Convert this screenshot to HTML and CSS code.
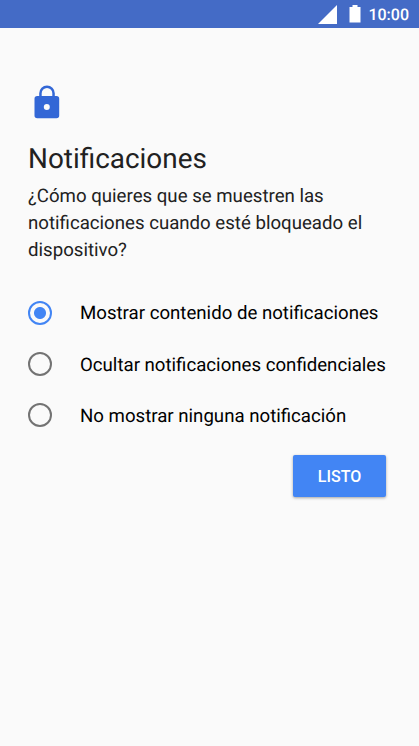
FILE: index.html
```html
<!DOCTYPE html>
<html lang="es">
<head>
<meta charset="utf-8">
<title>Notificaciones</title>
<link rel="stylesheet" href="styles.css">
</head>
<body>
<header class="status">
<svg class="signal" viewBox="0 0 20 20"><path d="M0 20L20 0V20Z"/></svg>
<svg class="battery" viewBox="0 0 12 18"><path d="M3.500 0h5v2H11.500v15.500H.5V2h3Z"/></svg>
<span class="clock">10:00</span>
</header>
<main class="page">
<svg class="lock" viewBox="0 0 26 34"><path fill-rule="evenodd" d="M22.500 11h-1.700V8.200a7.800 7.800 0 0 0-15.600 0V11H3.200a2.700 2.700 0 0 0-2.700 2.700V30.500a2.700 2.700 0 0 0 2.700 2.700h19.300a2.700 2.700 0 0 0 2.700-2.700V13.700a2.700 2.700 0 0 0-2.700-2.700ZM7.700 8.200a5.300 5.300 0 0 1 10.600 0V11H7.700ZM12.800 19a3 3 0 1 1 0 6 3 3 0 0 1 0-6Z"/></svg>
<h1 class="title">Notificaciones</h1>
<p class="text"><span>¿Cómo quieres que se muestren las</span><br><span>notificaciones cuando esté bloqueado el</span><br><span>dispositivo?</span></p>
<div class="options">
<label class="option"><i class="radio selected"></i><span>Mostrar contenido de notificaciones</span></label>
<label class="option"><i class="radio"></i><span>Ocultar notificaciones confidenciales</span></label>
<label class="option"><i class="radio"></i><span>No mostrar ninguna notificación</span></label>
</div>
<button class="done">LISTO</button>
</main>
</body>
</html>
```
FILE: styles.css
```css
* { box-sizing: border-box; }
body { margin: 0; height: 746px; background: #fafafa; font-family: Roboto, sans-serif; color: #212121; overflow: hidden; text-rendering: geometricPrecision; }
.status { height: 28px; background: #446bc6; display: flex; justify-content: flex-end; align-items: center; padding-right: 10px; color: #fff; }
.status svg { fill: #fff; }
.signal { width: 19px; height: 19px; margin-right: 12px; }
.battery { width: 12px; height: 18px; margin-right: 7.500px; }
.clock { font-size: 16px; font-weight: 500; line-height: 28px; padding-top: 2px; }
.page { display: flex; flex-direction: column; padding: 57px 33px 0 28px; }
.lock { width: 26px; height: 34px; margin-left: 5.500px; fill: #3367d6; }
.title { margin: 24px 0 0; font-size: 27.900px; line-height: 32px; font-weight: 400; }
.text { margin: 8px 0 0; font-size: 18.650px; line-height: 27px; white-space: nowrap; }
.options { margin-top: 23.200px; }
.option { display: flex; align-items: center; height: 51.300px; font-size: 18.650px; color: #000; white-space: nowrap; }
.option span { padding-top: 1px; }
.radio { width: 24px; height: 24px; border: 2.200px solid #737373; border-radius: 50%; margin-right: 28px; flex: none; }
.selected { border-color: #4285f4; background: radial-gradient(circle, #4285f4 5.500px, transparent 6.500px); }
.done { align-self: flex-end; margin: 14.300px 0 0; width: 93px; height: 42px; border: 0; border-radius: 2px; background: #4285f4; color: #fff; font: 500 16px/42px Roboto, sans-serif; padding: 1px 0 0; box-shadow: 0 1px 3px rgba(0,0,0,.35); }
```
